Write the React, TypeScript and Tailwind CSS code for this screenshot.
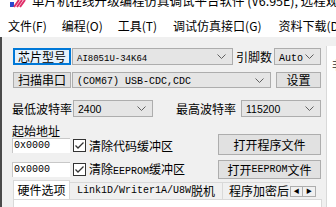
import type { ReactNode } from "react";

const mono = "font-['Liberation_Mono',monospace]";

const Chevron = () => (
  <svg width="9" height="5" viewBox="0 0 9 5" className="shrink-0">
    <path d="M0.5 0.5 L4.5 4.5 L8.5 0.5" fill="none" stroke="#606060" strokeWidth="1" />
  </svg>
);

const Combo = ({ size, children }: { size: string; children: ReactNode }) => (
  <div className={`flex items-center justify-between border border-[#adadad] bg-[#e5e5e5] pl-[4px] pr-[6px] ${size}`}>
    <span className="leading-none whitespace-nowrap">{children}</span>
    <Chevron />
  </div>
);

const Btn = ({ size, focused, children }: { size: string; focused?: boolean; children: ReactNode }) => (
  <div
    className={`flex items-center justify-center text-[12px] leading-none whitespace-nowrap ${size} ${
      focused ? "border-2 border-[#0078d7] bg-[#e5f1fb]" : "border border-[#adadad] bg-[#e1e1e1]"
    }`}
  >
    {children}
  </div>
);

const Check = () => (
  <svg width="13" height="13" viewBox="0 0 13 13" className="shrink-0">
    <rect x="0.5" y="0.5" width="12" height="12" fill="#fff" stroke="#333" />
    <path d="M2.5 6.5 L5 9 L10.5 3.5" fill="none" stroke="#333" strokeWidth="1.3" />
  </svg>
);

const AddrInput = () => (
  <div className="w-[58px] h-[15px] flex items-center bg-white border-t border-l border-[#c8c8c8] pl-[1px]">
    <span className={`${mono} text-[10px] leading-none`}>0x0000</span>
  </div>
);

export default function App() {
  return (
    <div className="w-[336px] h-[207px] overflow-hidden bg-white flex flex-col text-black font-['Noto_Sans_CJK_SC',sans-serif]">
      {/* window title, cut at the top */}
      <div className="h-[10px] shrink-0 overflow-hidden flex items-start pl-[10px]">
        <svg width="16" height="8" viewBox="0 0 16 8" className="shrink-0">
          <rect x="0" y="2" width="4" height="5" fill="#2a4bd0" />
          <path d="M4 7 L9 0 M7 7 L12 0 M10 7 L15 0" stroke="#e0306a" strokeWidth="2" />
        </svg>
        <div className="ml-[6px] mt-[-6px] text-[12.5px] leading-[13px] whitespace-nowrap">
          单片机在线升级编程仿真调试平台软件 (V6.95E), 远程观察
        </div>
      </div>

      {/* menu */}
      <div className="h-[27px] shrink-0 flex gap-[15px] pl-[8px] pt-[9px] text-[12px] leading-[14px] whitespace-nowrap">
        <span>文件(F)</span>
        <span>编程(O)</span>
        <span>工具(T)</span>
        <span className="ml-[1px]">调试仿真接口(G)</span>
        <span className="ml-[2px]">资料下载(D)</span>
      </div>

      <div className="flex-1 flex bg-[#f0f0f0] border-l-2 border-[#4a4a4a]">
        <div className="w-[324px] shrink-0 flex flex-col pl-[10px] text-[12px]">
          {/* chip */}
          <div className="mt-[11px] h-[17px] flex items-center">
            <Btn size="ml-[1px] w-[58px] h-[17px]" focused>芯片型号</Btn>
            <Combo size="ml-[1px] w-[161px] h-[17px]">
              <span className={`${mono} text-[9px]`}>AI8051U-34K64</span>
            </Combo>
            <span className="ml-[3px] leading-none">引脚数</span>
            <Combo size="ml-[2px] w-[47px] h-[17px]">
              <span className={`${mono} text-[10px]`}>Auto</span>
            </Combo>
          </div>

          {/* port */}
          <div className="mt-[7px] h-[16px] flex items-center">
            <Btn size="ml-[1px] w-[58px] h-[16px]">扫描串口</Btn>
            <Combo size="ml-[1px] w-[199px] h-[16px]">
              <span className={`${mono} text-[10px]`}>(COM67) USB-CDC,CDC</span>
            </Combo>
            <Btn size="ml-[5px] w-[45px] h-[16px]">设置</Btn>
          </div>

          {/* baud */}
          <div className="mt-[12px] h-[17px] flex items-center">
            <span className="w-[61px] leading-none">最低波特率</span>
            <Combo size="w-[80px] h-[17px]">
              <span className="font-['Liberation_Sans',sans-serif] text-[10.5px]">2400</span>
            </Combo>
            <span className="ml-[23px] w-[65px] leading-none">最高波特率</span>
            <Combo size="w-[80px] h-[17px]">
              <span className="font-['Liberation_Sans',sans-serif] text-[10.5px]">115200</span>
            </Combo>
          </div>

          {/* address + files */}
          <div className="mt-[7px] flex">
            <div className="w-[206px] flex flex-col">
              <div className="h-[14px] leading-[14px]">起始地址</div>
              <div className="h-[15px] flex items-center gap-[3px]">
                <AddrInput />
                <Check />
                <span className="leading-none whitespace-nowrap">清除代码缓冲区</span>
              </div>
              <div className="mt-[9px] h-[15px] flex items-center gap-[3px]">
                <AddrInput />
                <Check />
                <span className="leading-none whitespace-nowrap">
                  清除<span className={`${mono} text-[10px]`}>EEPROM</span>缓冲区
                </span>
              </div>
            </div>
            <div className="flex flex-col pt-[10px] gap-[5px]">
              <Btn size="w-[103px] h-[21px]">打开程序文件</Btn>
              <Btn size="w-[103px] h-[19px]">
                打开<span className={`${mono} text-[10px]`}>EEPROM</span>文件
              </Btn>
            </div>
          </div>

          {/* tabs */}
          <div className="mt-[2px] ml-[1px] w-[309px] flex items-end h-[19px] border-b border-[#d9d9d9] whitespace-nowrap">
            <div className="w-[57px] h-[19px] bg-white border border-b-0 border-[#d9d9d9] flex items-center justify-center leading-none">
              硬件选项
            </div>
            <div className="w-[153px] h-[17px] border-t border-r border-[#d9d9d9] flex items-center justify-center leading-none">
              <span className={`${mono} text-[10px]`}>Link1D/Writer1A/U8W</span>脱机
            </div>
            <div className="w-[67px] h-[17px] overflow-hidden border-t border-[#d9d9d9] flex items-center pl-[6px] leading-none">
              程序加密后
            </div>
            <div className="flex self-center mt-[2px]">
              <div className="w-[13px] h-[11px] border border-[#adadad] bg-[#f0f0f0] flex items-center justify-center text-[6px] leading-none">◀</div>
              <div className="w-[13px] h-[11px] border border-l-0 border-[#adadad] bg-[#f0f0f0] flex items-center justify-center text-[6px] leading-none">▶</div>
            </div>
          </div>
          <div className="ml-[1px] w-[309px] flex-1 bg-white border-l border-r border-[#d9d9d9]" />
        </div>

        {/* right side panel, cut off */}
        <div className="mt-[9px] flex-1 bg-white border-l border-[#d9d9d9] overflow-hidden pl-[5px] pt-[5px]">
          <span className="text-[12px] leading-none text-[#555] whitespace-nowrap">非</span>
        </div>
      </div>
    </div>
  );
}
